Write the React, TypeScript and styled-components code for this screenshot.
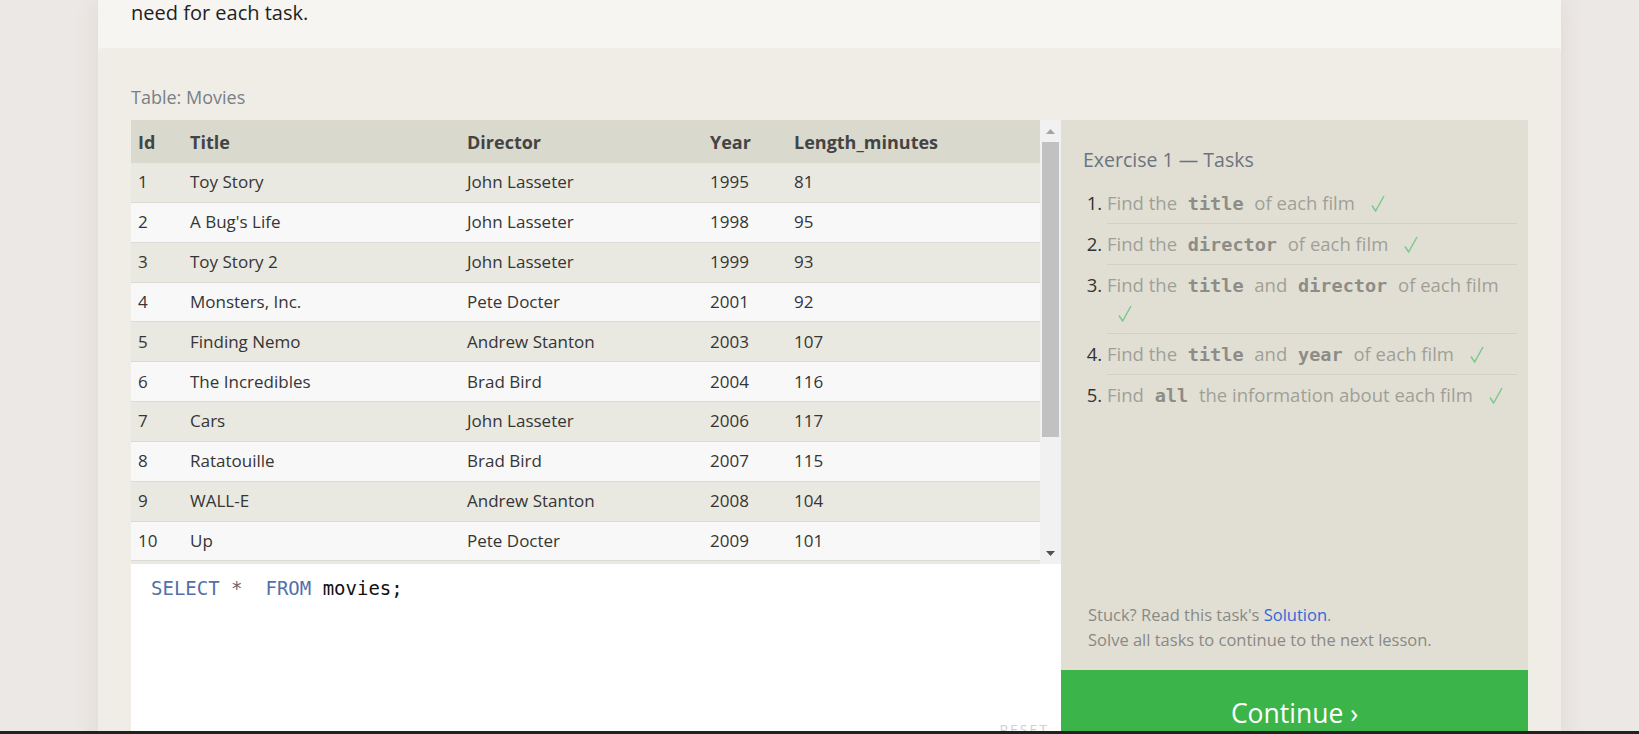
import React from "react";
import styled, { createGlobalStyle } from "styled-components";

const GlobalStyle = createGlobalStyle`
  html, body {
    margin: 0;
    padding: 0;
    overflow: hidden;
  }
  body {
    background: #ece8e5;
    font-family: "Open Sans", "Noto Sans", sans-serif;
    color: #333;
  }
`;

const Page = styled.div`
  padding-left: 98px;
`;

const Card = styled.div`
  width: 1463px;
  background: #f6f5f2;
  box-shadow: 0 0 26px rgba(60, 40, 30, 0.08);
`;

const Intro = styled.p`
  margin: 0;
  height: 48px;
  padding: 0 33px;
  font-size: 20px;
  line-height: 26px;
  color: #1e1e1e;
`;

const Exercise = styled.section`
  background: #efede6;
  border-radius: 4px 4px 0 0;
  padding: 36px 33px 0;
`;

const TableLabel = styled.div`
  font-size: 18px;
  line-height: 26px;
  color: #7a7f87;
  margin-bottom: 10px;
`;

const Workspace = styled.div`
  display: grid;
  grid-template-columns: 930px 467px;
`;

const LeftColumn = styled.div`
  display: flex;
  flex-direction: column;
`;

const TableFrame = styled.div`
  display: grid;
  grid-template-columns: 909px 21px;
  height: 444px;
`;

const TableViewport = styled.div`
  overflow: hidden;
`;

const MoviesTable = styled.table`
  width: 909px;
  table-layout: fixed;
  border-collapse: separate;
  border-spacing: 0;
  font-size: 17px;
`;

const HeadCell = styled.th`
  height: 43px;
  padding: 0 7px;
  background: #dad9cd;
  color: #444;
  font-size: 18px;
  font-weight: 700;
  text-align: left;
  vertical-align: middle;
`;

const Row = styled.tr<{ $odd: boolean }>`
  background: ${(p) => (p.$odd ? "#e9e8e1" : "#f8f8f8")};
`;

const Cell = styled.td`
  height: 38.85px;
  padding: 0 7px;
  border-bottom: 1px solid #dcdbd5;
  color: #353535;
  line-height: 22px;
  vertical-align: middle;
  white-space: nowrap;
`;

const ScrollBar = styled.div`
  display: flex;
  flex-direction: column;
  background: #f1f1f1;
`;

const ScrollButton = styled.div`
  height: 22px;
  display: flex;
  align-items: center;
  justify-content: center;
`;

const ScrollRail = styled.div`
  flex: 1;
  padding: 0 2px;
`;

const ScrollThumb = styled.div`
  height: 295px;
  background: #c1c1c1;
`;

const Editor = styled.div`
  position: relative;
  height: 188px;
  box-sizing: border-box;
  background: #ffffff;
  padding: 12px 20px;
  font-family: "DejaVu Sans Mono", "Liberation Mono", monospace;
  font-size: 19px;
  line-height: 24px;
  white-space: pre;
  color: #111;
`;

const Keyword = styled.span`
  color: #5270aa;
`;

const Operator = styled.span`
  color: #666;
`;

const ResetLabel = styled.span`
  position: absolute;
  right: 12px;
  bottom: 15px;
  font-family: "Open Sans", sans-serif;
  font-size: 14px;
  line-height: 14px;
  letter-spacing: 2px;
  color: #cfcfcf;
`;

const Panel = styled.aside`
  display: flex;
  flex-direction: column;
  background: #e1dfd4;
`;

const PanelBody = styled.div`
  flex: 1;
  display: flex;
  flex-direction: column;
  padding: 25px 11px 0 22px;
`;

const PanelTitle = styled.h3`
  margin: 0;
  font-size: 19.5px;
  line-height: 30px;
  font-weight: 400;
  color: #6c7380;
`;

const TaskList = styled.ol`
  margin: 8px 0 0;
  padding-left: 24px;
  font-size: 18.5px;
  line-height: 28px;
  color: #a09f97;
`;

const TaskItem = styled.li`
  padding: 6px 0;
  border-bottom: 1px solid #d3d1c6;

  &:last-child {
    border-bottom: none;
  }

  &::marker {
    color: #333;
  }
`;

const Code = styled.code`
  padding: 0 6px;
  font-family: "DejaVu Sans Mono", "Liberation Mono", monospace;
  font-weight: 700;
  font-size: 18.5px;
  line-height: 1;
  color: #8d8c86;
`;

const Check = styled.svg`
  display: inline-block;
  margin-left: 11px;
  vertical-align: -2px;
`;

const Stuck = styled.div`
  margin: auto 0 18px 5px;
  font-size: 16.5px;
  line-height: 25px;
  color: #8a8984;
`;

const SolutionLink = styled.a`
  color: #2f6ad8;
  text-decoration: none;
`;

const ContinueButton = styled.button`
  height: 82px;
  border: none;
  padding: 24px 0 20px;
  background: #3bb54a;
  color: #ffffff;
  font-family: "Open Sans", sans-serif;
  font-size: 26.5px;
  line-height: 38px;
  text-align: center;
  cursor: pointer;
`;

const TaskbarEdge = styled.div`
  position: fixed;
  left: 0;
  right: 0;
  bottom: 0;
  height: 3px;
  background: #222222;
`;

const movies: [number, string, string, number, number][] = [
  [1, "Toy Story", "John Lasseter", 1995, 81],
  [2, "A Bug's Life", "John Lasseter", 1998, 95],
  [3, "Toy Story 2", "John Lasseter", 1999, 93],
  [4, "Monsters, Inc.", "Pete Docter", 2001, 92],
  [5, "Finding Nemo", "Andrew Stanton", 2003, 107],
  [6, "The Incredibles", "Brad Bird", 2004, 116],
  [7, "Cars", "John Lasseter", 2006, 117],
  [8, "Ratatouille", "Brad Bird", 2007, 115],
  [9, "WALL-E", "Andrew Stanton", 2008, 104],
  [10, "Up", "Pete Docter", 2009, 101],
  [11, "Toy Story 3", "Lee Unkrich", 2010, 103],
  [12, "Cars 2", "John Lasseter", 2011, 120],
  [13, "Brave", "Brenda Chapman", 2012, 102],
  [14, "Monsters University", "Dan Scanlon", 2013, 110],
];

const CheckMark = () => (
  <Check width="14" height="17" viewBox="0 0 14 17" aria-label="done">
    <path d="M1 10.5 L4.6 16 L13 1" fill="none" stroke="#7cc98c" strokeWidth="1.5" />
  </Check>
);

const Triangle = ({ up, color }: { up?: boolean; color: string }) => (
  <svg width="9" height="5" viewBox="0 0 9 5">
    <path d={up ? "M0 5 L4.5 0 L9 5 Z" : "M0 0 L9 0 L4.5 5 Z"} fill={color} />
  </svg>
);

export default function App() {
  return (
    <>
      <GlobalStyle />
      <Page>
        <Card>
          <Intro>need for each task.</Intro>
          <Exercise>
            <TableLabel>Table: Movies</TableLabel>
            <Workspace>
              <LeftColumn>
                <TableFrame>
                  <TableViewport>
                    <MoviesTable>
                      <colgroup>
                        <col style={{ width: 52 }} />
                        <col style={{ width: 277 }} />
                        <col style={{ width: 243 }} />
                        <col style={{ width: 84 }} />
                        <col />
                      </colgroup>
                      <thead>
                        <tr>
                          <HeadCell>Id</HeadCell>
                          <HeadCell>Title</HeadCell>
                          <HeadCell>Director</HeadCell>
                          <HeadCell>Year</HeadCell>
                          <HeadCell>Length_minutes</HeadCell>
                        </tr>
                      </thead>
                      <tbody>
                        {movies.map((m, i) => (
                          <Row key={m[0]} $odd={i % 2 === 0}>
                            {m.map((v, j) => (
                              <Cell key={j}>{v}</Cell>
                            ))}
                          </Row>
                        ))}
                      </tbody>
                    </MoviesTable>
                  </TableViewport>
                  <ScrollBar>
                    <ScrollButton>
                      <Triangle up color="#a3a3a3" />
                    </ScrollButton>
                    <ScrollRail>
                      <ScrollThumb />
                    </ScrollRail>
                    <ScrollButton>
                      <Triangle color="#505050" />
                    </ScrollButton>
                  </ScrollBar>
                </TableFrame>
                <Editor>
                  <Keyword>SELECT</Keyword> <Operator>*</Operator>  <Keyword>FROM</Keyword> movies;
                  <ResetLabel>RESET</ResetLabel>
                </Editor>
              </LeftColumn>
              <Panel>
                <PanelBody>
                  <PanelTitle>Exercise 1 — Tasks</PanelTitle>
                  <TaskList>
                    <TaskItem>
                      Find the <Code>title</Code> of each film <CheckMark />
                    </TaskItem>
                    <TaskItem>
                      Find the <Code>director</Code> of each film <CheckMark />
                    </TaskItem>
                    <TaskItem>
                      Find the <Code>title</Code> and <Code>director</Code> of each film <CheckMark />
                    </TaskItem>
                    <TaskItem>
                      Find the <Code>title</Code> and <Code>year</Code> of each film <CheckMark />
                    </TaskItem>
                    <TaskItem>
                      Find <Code>all</Code> the information about each film <CheckMark />
                    </TaskItem>
                  </TaskList>
                  <Stuck>
                    Stuck? Read this task's <SolutionLink href="#">Solution</SolutionLink>.
                    <br />
                    Solve all tasks to continue to the next lesson.
                  </Stuck>
                </PanelBody>
                <ContinueButton>Continue ›</ContinueButton>
              </Panel>
            </Workspace>
          </Exercise>
        </Card>
      </Page>
      <TaskbarEdge />
    </>
  );
}
